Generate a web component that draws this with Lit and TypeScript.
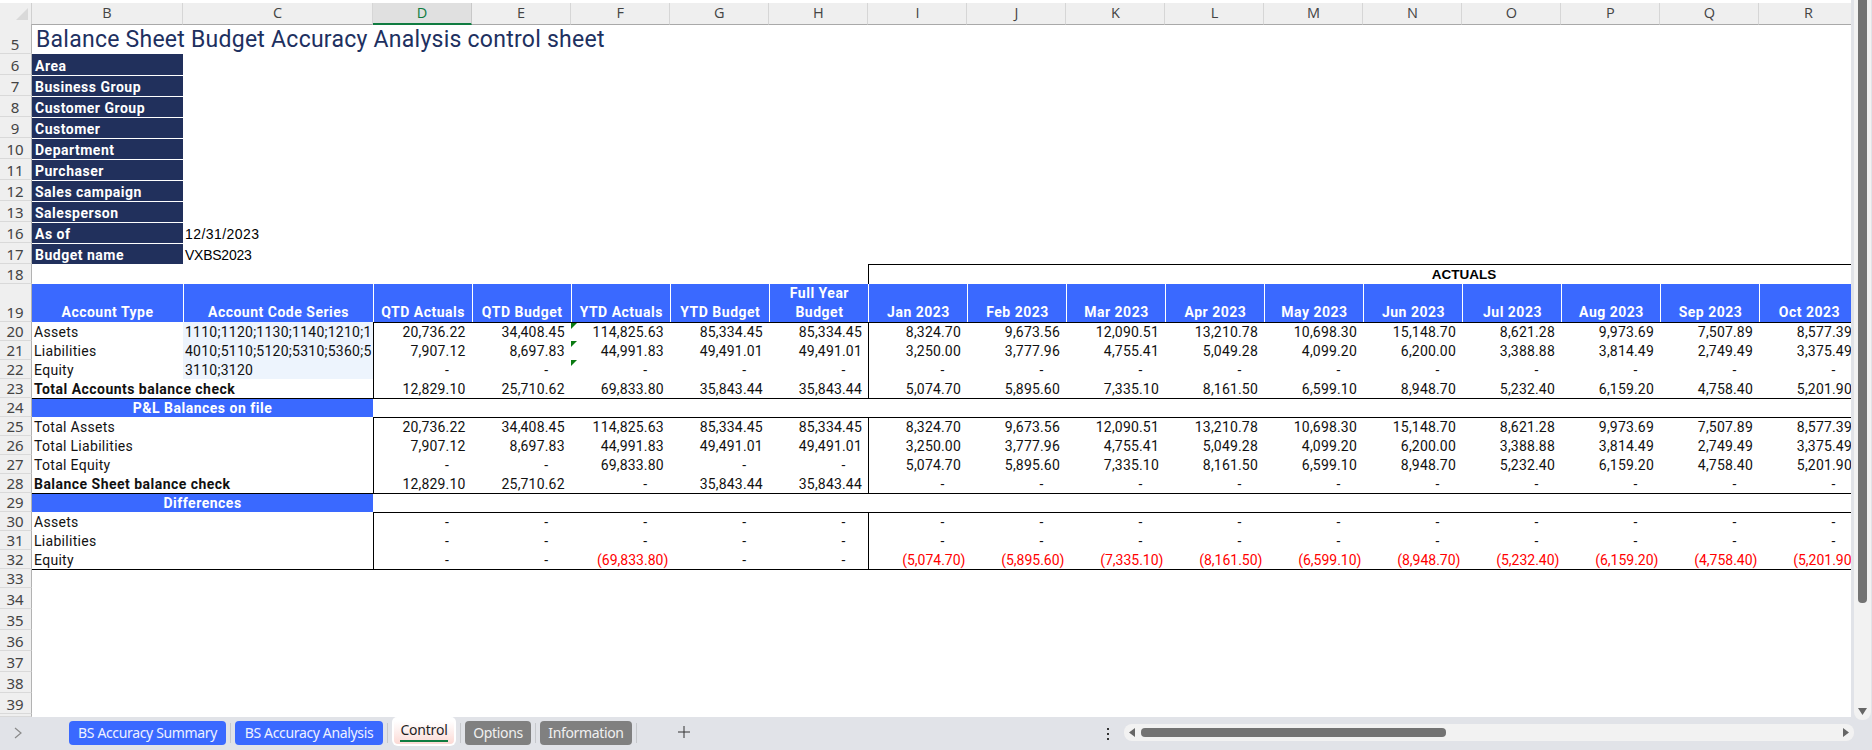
import { LitElement, html, css, nothing } from "lit";
import { customElement } from "lit/decorators.js";

const D = "-";
const assets = ["20,736.22","34,408.45","114,825.63","85,334.45","85,334.45","8,324.70","9,673.56","12,090.51","13,210.78","10,698.30","15,148.70","8,621.28","9,973.69","7,507.89","8,577.39"];
const liabs = ["7,907.12","8,697.83","44,991.83","49,491.01","49,491.01","3,250.00","3,777.96","4,755.41","5,049.28","4,099.20","6,200.00","3,388.88","3,814.49","2,749.49","3,375.49"];
const months = ["5,074.70","5,895.60","7,335.10","8,161.50","6,599.10","8,948.70","5,232.40","6,159.20","4,758.40","5,201.90"];
const dashes = (n: number) => Array(n).fill(D);
const negMonths = months.map((m) => `(${m})`);

type DataRow = { n: number; label: string; code?: string; vals: string[]; bold?: boolean; flags?: boolean; top?: boolean };
const block1: DataRow[] = [
  { n: 20, label: "Assets", code: "1110;1120;1130;1140;1210;1", vals: assets, flags: true, top: true },
  { n: 21, label: "Liabilities", code: "4010;5110;5120;5310;5360;5", vals: liabs, flags: true },
  { n: 22, label: "Equity", code: "3110;3120", vals: dashes(15), flags: true },
  { n: 23, label: "Total Accounts balance check", vals: ["12,829.10","25,710.62","69,833.80","35,843.44","35,843.44", ...months], bold: true },
];
const block2: DataRow[] = [
  { n: 25, label: "Total Assets", vals: assets, top: true },
  { n: 26, label: "Total Liabilities", vals: liabs },
  { n: 27, label: "Total Equity", vals: [D, D, "69,833.80", D, D, ...months] },
  { n: 28, label: "Balance Sheet balance check", vals: ["12,829.10","25,710.62",D,"35,843.44","35,843.44", ...dashes(10)], bold: true },
];
const block3: DataRow[] = [
  { n: 30, label: "Assets", vals: dashes(15), top: true },
  { n: 31, label: "Liabilities", vals: dashes(15) },
  { n: 32, label: "Equity", vals: [D, D, "(69,833.80)", D, D, ...negMonths] },
];
const letters = ["B","C","D","E","F","G","H","I","J","K","L","M","N","O","P","Q","R"];
const heads = ["Account Type","Account Code Series","QTD Actuals","QTD Budget","YTD Actuals","YTD Budget","FY","Jan 2023","Feb 2023","Mar 2023","Apr 2023","May 2023","Jun 2023","Jul 2023","Aug 2023","Sep 2023","Oct 2023"];
const navy: [number, string, string?, string?][] = [
  [6,"Area"],[7,"Business Group"],[8,"Customer Group"],[9,"Customer"],[10,"Department"],[11,"Purchaser"],[12,"Sales campaign"],[13,"Salesperson"],[16,"As of","12/31/2023","date"],[17,"Budget name","VXBS2023","bname"],
];

@customElement("app-root")
export class AppRoot extends LitElement {
  static styles = css`
    :host { display: block; width: 1872px; height: 750px; overflow: hidden; background: #e1e3e8; font-family: Roboto, "Liberation Sans", sans-serif; font-size: 14px; color: #111; }
    * { box-sizing: border-box; }
    .main { display: flex; height: 717px; }
    .sheet { width: 1851px; height: 717px; overflow: hidden; background: #fff; padding-top: 3px; flex: none; }
    .row { display: grid; grid-template-columns: 32px 151px 190px repeat(5, 99.1px) repeat(12, 99px); width: 2057px; }
    .h20 { height: 20px; } .h21 { height: 21px; } .h30 { height: 30px; } .h38 { height: 38px; } .h19 { height: 19px; } .h3 { height: 3px; }
    .rh { background: #efefef; border-right: 1px solid #b2b2b2; border-bottom: 1px solid #d9d9d9; font: 15px/18px "Noto Sans", "Open Sans", sans-serif; color: #444; display: flex; align-items: flex-end; justify-content: center; padding-right: 1px; }
    .colhead { height: 21px; }
    .corner { background: #efefef; border-right: 1px solid #d0d0d0; border-bottom: 1px solid #a9a9a9; display: flex; }
    .corner svg { width: 31px; height: 20px; display: block; }
    .ch { background: #efefef; border-right: 1px solid #d6d6d6; border-bottom: 1px solid #a9a9a9; font: 14.5px/20px "Open Sans", "Noto Sans", sans-serif; color: #444; text-align: center; }
    .ch.sel { background: #e0e0e0; color: #107c41; border-bottom: 2px solid #107c41; border-right-color: #c8c8c8; }
    .cell { display: flex; align-items: flex-end; line-height: 18px; white-space: nowrap; overflow: hidden; padding-left: 2px; min-width: 0; }
    .title { grid-column: 2 / -1; font-size: 23px; line-height: 29px; letter-spacing: 0.25px; color: #20305f; padding-left: 4px; overflow: visible; }
    .nv { background: #21305c; color: #fff; font-weight: 700; border-top: 1px solid #fff; letter-spacing: 0.5px; padding-left: 3px; }
    .nv.first { border-top: 0; }
    .plain { font-family: "Liberation Sans", Arial, sans-serif; color: #000; padding-left: 2px; grid-column: 3 / -1; }
    .date { letter-spacing: 0.44px; }
    .bname { letter-spacing: -0.25px; }
    .hd { background: #3a69ff; color: #fff; font-weight: 700; justify-content: center; text-align: center; white-space: normal; line-height: 19px; letter-spacing: 0.5px; border-left: 1px solid #fff; padding: 0; overflow: hidden; }
    .hd.first { border-left: 0; }
    .actuals { grid-column: 9 / span 12; border-left: 1px solid #000; border-top: 1px solid #000; justify-content: center; font-weight: 700; color: #000; font-family: "Liberation Sans", Arial, sans-serif; font-size: 13.5px; line-height: 19px; }
    .gap { grid-column: 2 / span 7; }
    .lbl { letter-spacing: 0.3px; }
    .code { background: #edf4fd; padding-left: 2px; font-size: 14px; letter-spacing: 0.25px; }
    .blank-code { background: #fff; }
    .lbl.wide { grid-column: 2 / span 2; font-weight: 700; letter-spacing: 0.47px; }
    .num { justify-content: flex-end; padding: 0 6.5px 0 0; color: #111; position: relative; letter-spacing: 0.18px; }
    .num.dash { padding-right: 23px; }
    .num.neg { color: #f00; padding-right: 2px; font-size: 14px; letter-spacing: 0; }
    .vl { border-left: 1px solid #000; }
    .tl { border-top: 1px solid #000; }
    .sec { grid-column: 2 / span 2; background: #3a69ff; color: #fff; font-weight: 700; justify-content: center; padding: 0; border-top: 1px solid #000; letter-spacing: 0.5px; }
    .secfill { grid-column: 4 / -1; border-top: 1px solid #000; }
    .full { grid-column: 2 / -1; }
    .flag { position: absolute; left: 0; top: 0; width: 6px; height: 6px; display: block; }
    .vtrack { position: relative; z-index: 1; margin-left: 3px; width: 17px; height: 720px; background: #f2f2f2; border-radius: 0 0 8px 8px; flex: none; padding-left: 4px; }
    .vthumb { width: 9px; height: 603px; background: #737373; border-radius: 0 0 4px 4px; }
    .varrow { position: absolute; left: 4px; top: 708px; width: 9px; height: 7px; display: block; }
    .bar { display: flex; align-items: flex-start; height: 33px; position: relative; }
    .chev { width: 10px; height: 12px; margin: 10px 0 0 13px; flex: none; }
    .tabs { display: flex; align-items: flex-start; margin-left: 46px; }
    .tab { height: 24px; margin-top: 4px; border-radius: 4px; color: #eef1ff; font: 14px/24px "Noto Sans", "Open Sans", sans-serif; letter-spacing: -0.35px; text-align: center; white-space: nowrap; flex: none; }
    .blue { background: #3a69ff; }
    .grey { background: #808080; color: #f0f0f0; }
    .t1 { width: 157px; } .t2 { width: 148px; } .t4 { width: 66px; } .t5 { width: 92px; }
    .sep { width: 1px; height: 20px; margin: 6px 4px 0 4px; background: #c6c8cc; flex: none; }
    .active { width: 64px; height: 29px; background: linear-gradient(#fff 0 15%, #fdeeec 55%, #fcd9d4); border: 2px solid #fff; border-top-width: 0; border-radius: 5px 5px 6px 6px; color: #1e1e1e; font: 14px/26px "Noto Sans", "Open Sans", sans-serif; letter-spacing: -0.2px; text-align: center; flex: none; position: relative; }
    .uline { position: absolute; left: 6px; right: 6px; top: 23px; height: 2px; background: #107c41; }
    .plus { width: 12px; height: 12px; margin: 9px 0 0 37px; flex: none; }
    .right { margin-left: auto; display: flex; align-items: flex-start; padding-right: 18px; }
    .dots { width: 3px; height: 12px; margin: 11px 14px 0 0; display: block; flex: none; }
    .htrack { width: 730px; height: 17px; margin-top: 7px; background: #f2f2f2; border-radius: 8px; display: flex; align-items: center; padding: 0 5px; }
    .harrow { width: 6px; height: 9px; display: block; flex: none; }
    .hthumb { width: 305px; height: 9px; background: #737373; border-radius: 4px; margin-left: 6px; }
    .harrow.r { margin-left: auto; }
  `;

  private num(v: string, i: number, top: boolean, flag: boolean) {
    const kind = v === D ? "dash" : v.startsWith("(") ? "neg" : "";
    const vl = i === 0 || i === 5 ? "vl" : "";
    return html`<div class="cell num ${kind} ${vl} ${top ? "tl" : ""}">${v}${flag && i === 2
      ? html`<svg class="flag" viewBox="0 0 6 6"><path d="M0 0H6L0 6Z" fill="#0b7a12"/></svg>`
      : nothing}</div>`;
  }

  private dataRow(r: DataRow) {
    return html`<div class="row h19">
      <div class="rh">${r.n}</div>
      ${r.bold
        ? html`<div class="cell lbl wide">${r.label}</div>`
        : html`<div class="cell lbl">${r.label}</div><div class="cell ${r.code ? "code" : "blank-code"}">${r.code ?? ""}</div>`}
      ${r.vals.map((v, i) => this.num(v, i, !!r.top, !!r.flags))}
    </div>`;
  }

  private section(n: number, label: string) {
    return html`<div class="row h19"><div class="rh">${n}</div><div class="cell sec">${label}</div><div class="secfill"></div></div>`;
  }

  render() {
    return html`
      <div class="main">
        <div class="sheet">
          <div class="row colhead">
            <div class="corner"><svg viewBox="0 0 31 20"><path d="M28 5V17H16Z" fill="#d9d9d9"/></svg></div>
            ${letters.map((l) => html`<div class="ch ${l === "D" ? "sel" : ""}">${l}</div>`)}
          </div>
          <div class="row h30"><div class="rh">5</div><div class="cell title">Balance Sheet Budget Accuracy Analysis control sheet</div></div>
          ${navy.map(([n, label, val, cls], i) => html`<div class="row h21">
            <div class="rh">${n}</div>
            <div class="cell nv ${i === 0 ? "first" : ""}">${label}</div>
            ${val ? html`<div class="cell plain ${cls}">${val}</div>` : nothing}
          </div>`)}
          <div class="row h20"><div class="rh">18</div><div class="gap"></div><div class="cell actuals">ACTUALS</div></div>
          <div class="row h38">
            <div class="rh">19</div>
            ${heads.map((h, i) => html`<div class="cell hd ${i === 0 ? "first" : ""}">${h === "FY" ? html`<span>Full Year<br />Budget</span>` : html`<span>${h}</span>`}</div>`)}
          </div>
          ${block1.map((r) => this.dataRow(r))}
          ${this.section(24, "P&L Balances on file")}
          ${block2.map((r) => this.dataRow(r))}
          ${this.section(29, "Differences")}
          ${block3.map((r) => this.dataRow(r))}
          <div class="row h19"><div class="rh">33</div><div class="full tl"></div></div>
          ${[34, 35, 36, 37, 38, 39].map((n) => html`<div class="row h21"><div class="rh">${n}</div></div>`)}
          <div class="row h3"><div class="rh"></div></div>
        </div>
        <div class="vtrack">
          <div class="vthumb"></div>
          <svg class="varrow" viewBox="0 0 9 7"><path d="M0 0H9L4.5 7Z" fill="#666"/></svg>
        </div>
      </div>
      <div class="bar">
        <svg class="chev" viewBox="0 0 10 12"><path d="M2 1L8 6L2 11" fill="none" stroke="#8a8a8a" stroke-width="1.2"/></svg>
        <div class="tabs">
          <div class="tab blue t1">BS Accuracy Summary</div><div class="sep"></div>
          <div class="tab blue t2">BS Accuracy Analysis</div><div class="sep"></div>
          <div class="active">Control<div class="uline"></div></div><div class="sep"></div>
          <div class="tab grey t4">Options</div><div class="sep"></div>
          <div class="tab grey t5">Information</div><div class="sep"></div>
          <svg class="plus" viewBox="0 0 12 12"><path d="M6 0V12M0 6H12" stroke="#333" stroke-width="1"/></svg>
        </div>
        <div class="right">
          <svg class="dots" viewBox="0 0 3 12"><path d="M0 0H2V2H0ZM0 5H2V7H0ZM0 10H2V12H0Z" fill="#333"/></svg>
          <div class="htrack">
            <svg class="harrow" viewBox="0 0 6 9"><path d="M6 0V9L0 4.5Z" fill="#666"/></svg>
            <div class="hthumb"></div>
            <svg class="harrow r" viewBox="0 0 6 9"><path d="M0 0V9L6 4.5Z" fill="#666"/></svg>
          </div>
        </div>
      </div>
    `;
  }
}
